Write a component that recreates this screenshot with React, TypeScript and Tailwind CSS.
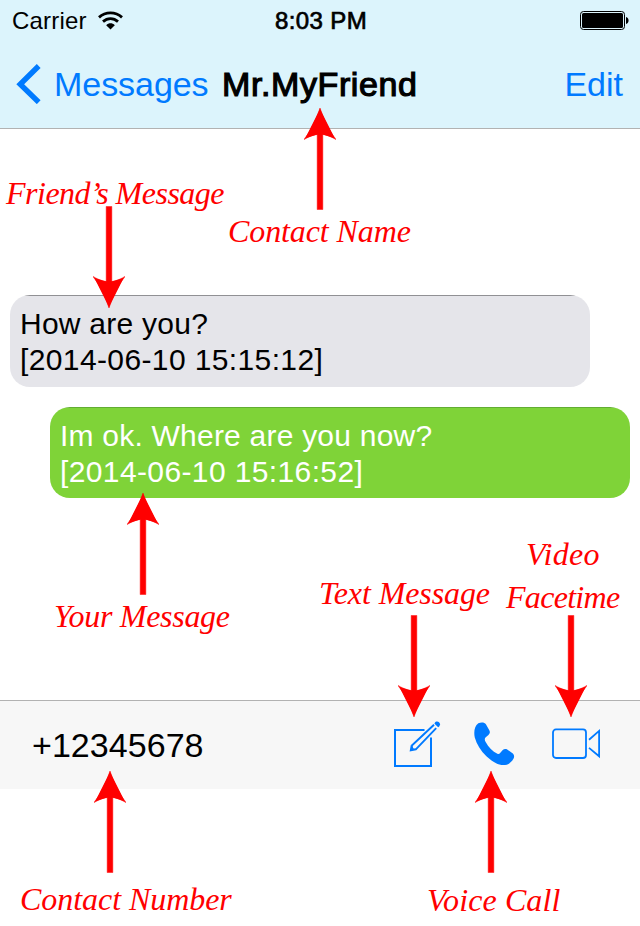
import React from "react";

type Note = { text: string; className: string };
type Pointer = { className: string };

const notes: Note[] = [
  { text: "Friend’s Message", className: "left-[6px] top-[175px] tracking-[-0.5px]" },
  { text: "Contact Name", className: "left-[228px] top-[213px] tracking-[-0.1px]" },
  { text: "Your Message", className: "left-[54px] top-[598px] tracking-[-0.3px]" },
  { text: "Text Message", className: "left-[319px] top-[575px] tracking-[-0.1px]" },
  { text: "Video", className: "left-[526px] top-[536px] tracking-[0.3px]" },
  { text: "Facetime", className: "left-[506px] top-[579px] tracking-[-0.7px]" },
  { text: "Contact Number", className: "left-[20px] top-[881px] tracking-[-0.05px]" },
  { text: "Voice Call", className: "left-[427px] top-[882px] tracking-[0.1px]" },
];

const pointers: Pointer[] = [
  { className: "left-[304px] top-[108px]" },
  { className: "left-[93px] top-[206px] rotate-180" },
  { className: "left-[127px] top-[493px]" },
  { className: "left-[398px] top-[615px] rotate-180" },
  { className: "left-[555px] top-[615px] rotate-180" },
  { className: "left-[94px] top-[771px]" },
  { className: "left-[475px] top-[771px]" },
];

function Arrow({ className }: Pointer) {
  return (
    <svg className={`absolute h-[102px] w-[32px] ${className}`} viewBox="0 0 32 102" fill="#ff0000">
      <path d="M16 0C19.5 10.5 25 23 32.2 31.7C28.5 29.3 23 27 18.8 26.4V101.6H13.2V26.4C9 27 3.5 29.3 -.2 31.7C7 23 12.5 10.5 16 0Z" stroke="#ff0000" strokeWidth=".5" />
      <path d="M16 1L25.6 20L30.6 30L18.8 26.4H13.2L1.4 30L6.4 20Z" />
    </svg>
  );
}

function Wifi() {
  return (
    <svg className="ml-[11px] h-[19px] w-[25px]" viewBox="0 0 25 19" fill="none" stroke="#000" strokeWidth="2.8">
      <path d="M1 6.4C7.5 .4 17.5 .4 24 6.4" />
      <path d="M5 10.6C9.4 6.6 15.6 6.6 20 10.6" />
      <path d="M8.2 14.2C10.8 11.7 14.2 11.7 16.8 14.2L12.5 18.6Z" fill="#000" stroke="none" />
    </svg>
  );
}

function Battery() {
  return (
    <svg className="mt-[2px] h-[20px] w-[50px]" viewBox="0 0 50 20">
      <rect x=".5" y=".5" width="44" height="18" rx="3" fill="none" stroke="#000" />
      <rect x="2" y="2" width="41" height="15" rx="1.5" />
      <path d="M46 6C49.4 6.7 49.4 12.3 46 13Z" />
    </svg>
  );
}

function Header() {
  return (
    <header className="h-[129px] border-b border-[#b2b2b2] bg-[#dcf4fc]">
      <div className="grid h-10 grid-cols-3 items-center pl-[12px] pr-[10px]">
        <div className="flex items-center pt-px text-[24px] tracking-[0.2px]">
          <span>Carrier</span>
          <Wifi />
        </div>
        <span className="pt-px text-center text-[24px] tracking-[0.4px] [-webkit-text-stroke:0.7px_#000]">8:03 PM</span>
        <div className="flex justify-end">
          <Battery />
        </div>
      </div>
      <div className="flex h-[88px] items-center pl-[16px] pr-[17px] text-[34px] leading-[40px]">
        <svg className="h-[40px] w-[25px] shrink-0" viewBox="0 0 25 40" fill="none" stroke="#007aff" strokeWidth="5.4">
          <path d="M22.7 2L4.2 20.3L22.7 38.2" />
        </svg>
        <span className="ml-[13px] w-[168px] shrink-0 tracking-[-0.05px] text-[#007aff]">Messages</span>
        <span className="tracking-[0.6px] [-webkit-text-stroke:1.2px_#000]">Mr.MyFriend</span>
        <span className="ml-auto text-[#007aff]">Edit</span>
      </div>
    </header>
  );
}

function ComposeIcon() {
  return (
    <svg className="h-[48px] w-[48px]" viewBox="0 0 48 48" fill="none" stroke="#007aff" strokeWidth="2">
      <path d="M30.5 10H1V46H37V17.5" />
      <path d="M17.6 25.8L40 4.8M21.6 29.6L42.2 8.2" strokeWidth="1.9" />
      <path d="M15.6 31.6L16.8 25L18.6 25.4L19.2 28.2L22.2 28.8L22.2 30.3Z" fill="#007aff" stroke="none" />
      <path d="M40.7 2.9C42.6 -.2 48 2.6 45.2 6.5L44.2 7.2L40.5 3.8Z" fill="#007aff" stroke="none" />
    </svg>
  );
}

function PhoneIcon() {
  return (
    <svg className="h-[44px] w-[41px]" viewBox="0 0 42 44" preserveAspectRatio="none" fill="#007aff">
      <path d="M4.4 1.3C7.4-.2 10.9.2 12.2 2.3L15.8 8.6C16.7 10.4 16.3 11.7 14.8 13L12 15.3C10.7 16.5 10.8 18 11.8 19.7C15 25.3 19 29.5 24 31.8C25.2 32.3 26 31.9 27 30.8L29.2 28.2C30.5 26.8 32.5 26.6 34 27.4L39.8 31.4C41.4 32.9 41.4 35.2 40.4 36.8C37.8 41.4 33.6 43.6 28 43C22.7 42.1 17.2 38.5 12.7 34.3C6.8 28.7 2.7 22.3 .8 15.5C-.5 9.3 .7 4.2 4.4 1.3Z" />
    </svg>
  );
}

function VideoIcon() {
  return (
    <svg className="h-[32px] w-[49px]" viewBox="0 0 49 32" fill="none" stroke="#007aff" strokeWidth="1.8">
      <rect x="1" y="2.4" width="33" height="28.6" rx="3" />
      <path d="M37 12.7L47.1 3.9V29.3L37 20.9" />
    </svg>
  );
}

function Footer() {
  return (
    <footer className="flex h-[89px] border-t border-[#b2b2b2] bg-[#f7f7f7] pl-[32px]">
      <span className="mt-[24px] w-[362px] text-[34px] leading-[40px] tracking-[0.05px]">+12345678</span>
      <div className="mt-[19px]"><ComposeIcon /></div>
      <div className="ml-[32px] mt-[21px]"><PhoneIcon /></div>
      <div className="ml-[37px] mt-[26px]"><VideoIcon /></div>
    </footer>
  );
}

export default function App() {
  return (
    <div className="relative h-[926px] w-[640px] overflow-hidden bg-white font-['Liberation_Sans',Arial,sans-serif] text-black">
      <Header />
      <main className="flex h-[571px] flex-col gap-[20px] pt-[166px] text-[30px] leading-[36px]">
        <div className="ml-[10px] h-[92px] w-[580px] rounded-[20px] bg-[#e5e5ea] bg-linear-to-b from-[#909094] from-[1px] to-transparent to-[1px] pl-[10px] pt-[11px]">
          <p className="tracking-[0.25px]">How are you?</p>
          <p className="tracking-[0.38px]">[2014-06-10 15:15:12]</p>
        </div>
        <div className="ml-[50px] h-[91px] w-[580px] rounded-[20px] bg-[#7fd338] bg-linear-to-b from-[#62ad32] from-[1px] to-transparent to-[1px] pl-[10px] pt-[11px] text-white">
          <p className="tracking-[0.22px]">Im ok. Where are you now?</p>
          <p className="tracking-[0.38px]">[2014-06-10 15:16:52]</p>
        </div>
      </main>
      <Footer />
      {pointers.map((p) => (
        <Arrow key={p.className} className={p.className} />
      ))}
      {notes.map((n) => (
        <span
          key={n.text}
          className={`absolute whitespace-nowrap font-['Monotype_Corsiva','Z003','URW_Chancery_L','Liberation_Serif',serif] text-[32px] leading-[36px] text-[#ff0000] italic ${n.className}`}
        >
          {n.text}
        </span>
      ))}
    </div>
  );
}
